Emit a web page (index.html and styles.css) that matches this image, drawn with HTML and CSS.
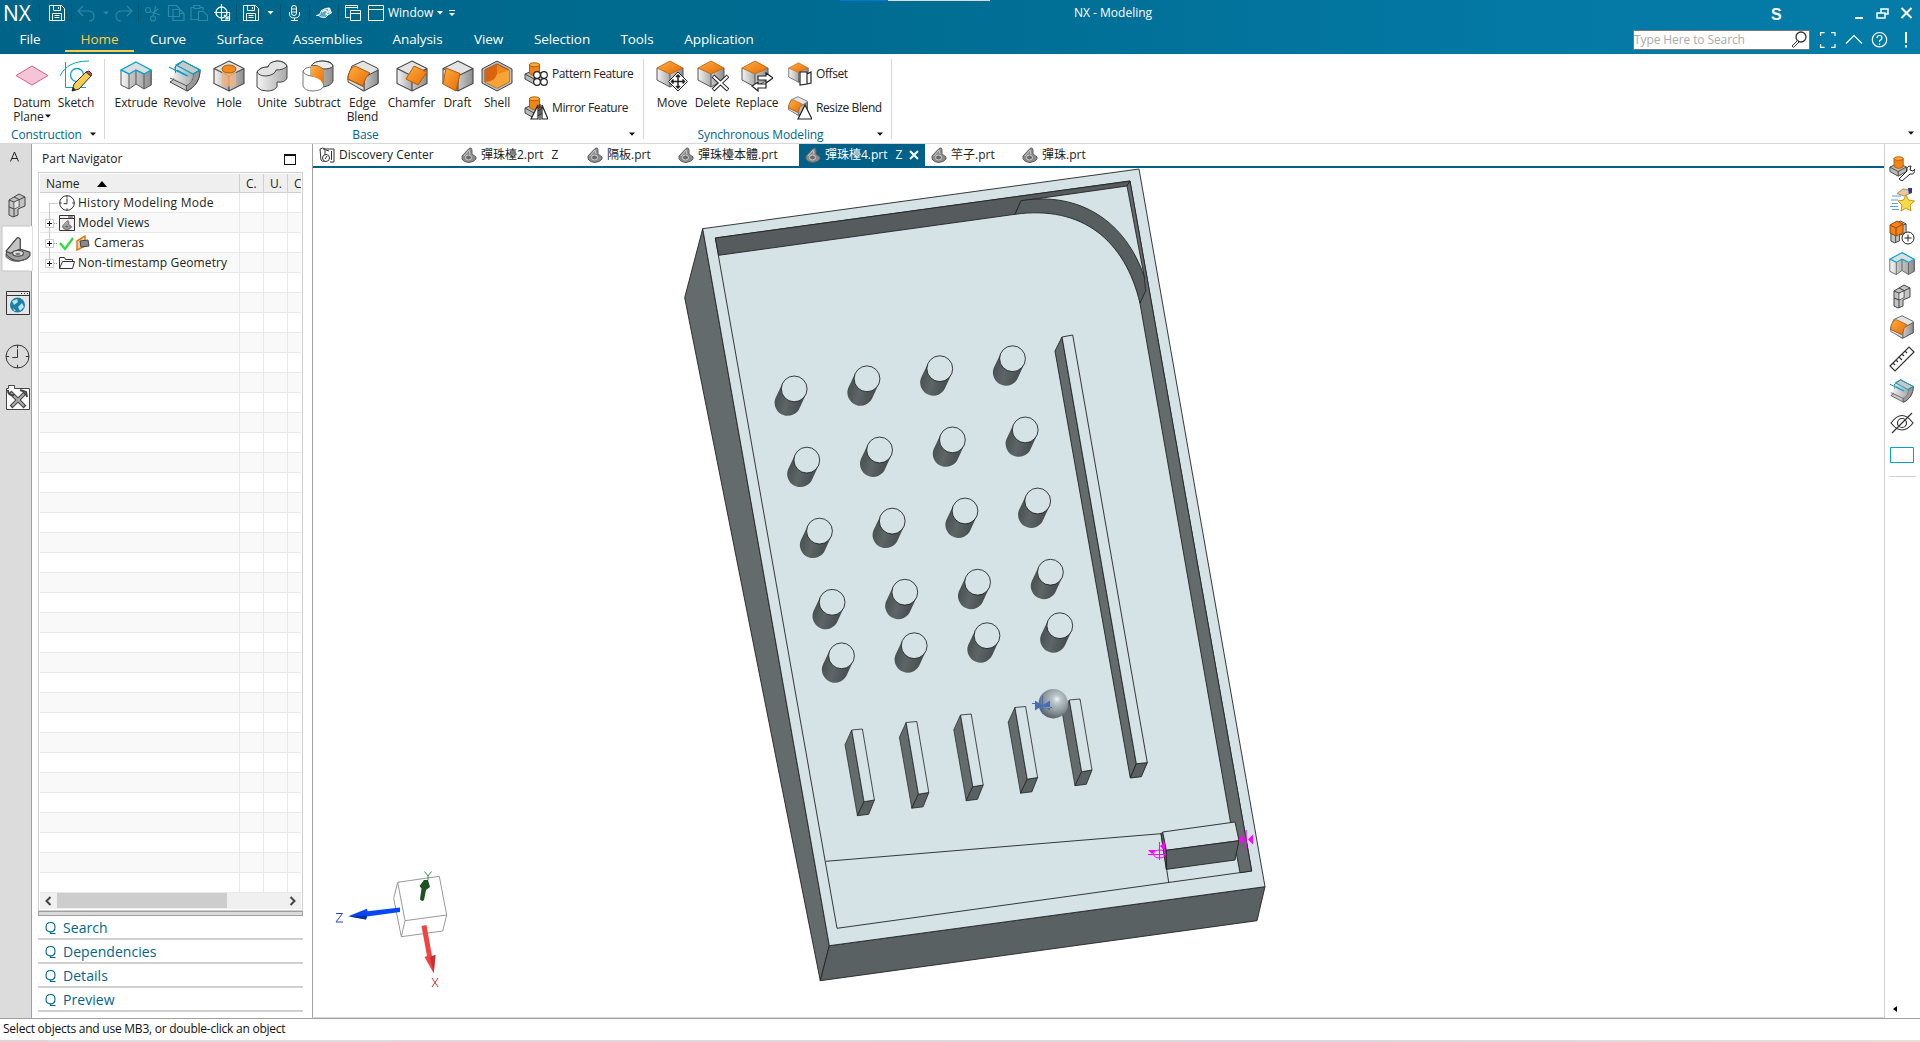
FILE: index.html
```html
<!DOCTYPE html>
<html lang="zh-Hant">
<head>
<meta charset="utf-8">
<title>NX - Modeling</title>
<link rel="stylesheet" href="styles.css">
</head>
<body>
<svg class="defs" width="0" height="0" aria-hidden="true">
  <defs>
    <linearGradient id="gO" x1="0" y1="0" x2="1" y2="1"><stop offset="0" stop-color="#fdb040"/><stop offset="1" stop-color="#e86a05"/></linearGradient>
    <linearGradient id="gG" x1="0" y1="0" x2="1" y2="0"><stop offset="0" stop-color="#f4f4f4"/><stop offset="1" stop-color="#a9a9a9"/></linearGradient>
    <linearGradient id="gD" x1="0" y1="0" x2="1" y2="0"><stop offset="0" stop-color="#c9c9c9"/><stop offset="1" stop-color="#8e8e8e"/></linearGradient>
    <linearGradient id="gPeg" x1="0" y1="0" x2="1" y2=".3"><stop offset="0" stop-color="#43494b"/><stop offset=".5" stop-color="#5d6567"/><stop offset="1" stop-color="#464c4e"/></linearGradient>
    <radialGradient id="gBall" cx=".62" cy=".35" r=".65"><stop offset="0" stop-color="#f2f8fa"/><stop offset=".2" stop-color="#bcc8cc"/><stop offset=".65" stop-color="#8d989c"/><stop offset="1" stop-color="#5e676a"/></radialGradient>
    <symbol id="cube" viewBox="0 0 32 32"><path d="M16 1 31 8.500v15L16 31 1 23.500v-15z" fill="#e4e4e4"/><path d="M1 8.500 16 16v15L1 23.500z" fill="url(#gG)"/><path d="M31 8.500 16 16v15l15-7.500z" fill="url(#gD)"/><path d="M16 1 31 8.500v15L16 31 1 23.500v-15zM1 8.500 16 16l15-7.500M16 16v15" fill="none" stroke="#444" stroke-width="1.100"/></symbol>
    <symbol id="ocube" viewBox="0 0 32 32"><path d="M1 8 14 14v13L1 20z" fill="url(#gG)"/><path d="M27 8 14 14v13l13-7z" fill="url(#gD)"/><path d="M14 1 27 8 14 14 1 8z" fill="url(#gO)" stroke="#b85a00" stroke-width=".8"/><path d="M1 8v12l13 7 13-7V8M14 14v13" fill="none" stroke="#555"/></symbol>
    <symbol id="extrude" viewBox="0 0 32 32"><path d="M1 10 9 14v15l-8-4zM16 10l8 4v15l-8-5z" fill="url(#gG)"/><path d="M9 14l7-4v14l-7 5zM24 14l8-4v15l-8 4z" fill="url(#gD)"/><path d="M16 2 31 10 24 14 16 10 9 14 1 10z" fill="#dedede"/><path d="M1 10v15l8 4 7-5 8 5 7-4V10M9 14v15M16 10v14M24 14v15" fill="none" stroke="#555"/><path d="M16 2 31 10 24 14 16 10 9 14 1 10z" fill="none" stroke="#00a5cf" stroke-width="1.400"/></symbol>
    <symbol id="revolve" viewBox="0 0 32 32"><path d="M14 1 31 10C31 20 26 27 18 31L1 22c6-3 6-8 5-15z" fill="#c9c9c9" stroke="#444"/><path d="M24 14 31 10C31 20 26 27 18 31c-1-2-1-5 0-6 5-3 6-6 6-11z" fill="#999" stroke="#444"/><path d="M7 6 24 14C24 19 23 22 18 25L2 17C7 14 8 11 7 6z" fill="url(#gG)"/><path d="M1 18 18 26" fill="none" stroke="#555"/><path d="M14 1 31 10 24 14 7 5zM0 7l18 9M8 10l11 6" fill="none" stroke="#00a5cf" stroke-width="1.300"/></symbol>
    <symbol id="part" viewBox="0 0 24 24"><path d="M2 13 11 2q2-1 3 1v9l9 3v3q-3 4-10 5-7 0-12-6z" fill="#a0a0a0" stroke="#444"/><path d="M11 2q2-1 3 1v9l-9 4-4-2z" fill="#c4c4c4" stroke="#444"/><ellipse cx="12" cy="16" rx="5" ry="2.600" fill="#e4e4e4" stroke="#444"/><ellipse cx="12" cy="16.500" rx="2.400" ry="1" fill="#777"/><path d="M1 17v2q5 5 12 4 8-1 10-5" fill="none" stroke="#555"/></symbol>
    <symbol id="tabpart" viewBox="0 0 16 16"><path d="M1 9 8 1.500q3-1.500 3 2V7l4 3v2q-2 3-7 3.500-6-.5-7-4z" fill="#8b8b8b" stroke="#606060"/><path d="M3 9 8 3l1 4" fill="none" stroke="#c8c8c8"/><ellipse cx="7.500" cy="10.500" rx="3" ry="2.500" fill="#6b6b6b" stroke="#d0d0d0"/></symbol>
    <symbol id="blocks" viewBox="0 0 20 26"><path d="M2 8 12 2l6 3v9l-7 3v6l-5 2-4-2z" fill="#c3c3c3" stroke="#444"/><path d="M2 8l5 2 11-5M7 10v15M2 15l5 2 5-2.500M7 5l5 2.500V15" fill="none" stroke="#444"/><path d="M7.500 10.500 11.500 8.500v6l-4 2z" fill="#e6e6e6"/></symbol>
    <symbol id="clock" viewBox="0 0 24 24"><g fill="none" stroke="#333"><circle cx="12" cy="12" r="11" vector-effect="non-scaling-stroke"/><path d="M12 1v3M12 20v3M1 12h3M20 12h3M12 5v8H7" vector-effect="non-scaling-stroke"/></g></symbol>
    <symbol id="save" viewBox="0 0 16 16"><path d="M.5.5h12l3 3v12H.5zM4.500.5v5h7v-5M3.500 15V8.500h9V15M5.500 10.500h5M5.500 12.500h5M9.500 2v2" fill="none" stroke="#fff"/></symbol>
    <symbol id="cyl" viewBox="0 0 24 24"><path d="M1 12 10 8l9 4v5l-9 5-9-5z" fill="#bcbcbc" stroke="#444"/><path d="M1 12l9 5 9-5M10 17v5" fill="none" stroke="#444"/><path d="M5.500 2.500v9q5 4 10 0v-9z" fill="#ee8519" stroke="#b85a00"/><ellipse cx="10.500" cy="2.800" rx="5" ry="2" fill="#fdab3f" stroke="#b85a00"/></symbol>
    <symbol id="blend" viewBox="0 0 32 32"><path d="M16 1 31 8.500v15L16 31 1 20v-4L5 6z" fill="#e4e4e4" stroke="#444"/><path d="M31 10 18 17q-1 4-1 14l14-7.500z" fill="url(#gD)" stroke="#444"/><path d="M1 19l16 8v4L1 22z" fill="#ddd" stroke="#555"/><path d="M8 6 23 13q-5 4-7 13L1 19Q2 8 8 6z" fill="url(#gO)" stroke="#b85a00"/></symbol>
    <symbol id="caret" viewBox="0 0 6 4"><path d="M0 .5h6L3 3.800z" fill="currentColor"/></symbol>
    <symbol id="peg" overflow="visible"><path d="M-12.700-4.500-19.300 9.500A13 13 0 0 0 5.300 18.500L11.700 4.500z" fill="url(#gPeg)"/><circle cx="-.5" cy=".2" r="12.900" fill="#d5e2e6" stroke="#111" stroke-width=".8"/></symbol>
    <symbol id="fin" overflow="visible"><path d="M0 0-6.700 14.700 5.700 85.700 12.300 71.700z" fill="#646b6d" stroke="#222" stroke-width=".7"/><path d="M12.300 71.700 22.700 70 17 84.300 5.700 85.700z" fill="#5a6163" stroke="#222" stroke-width=".8"/><path d="M0 0 10.700-1 22.700 70 12.300 71.700z" fill="#d5e2e6" stroke="#222" stroke-width=".8"/></symbol>
    <symbol id="q" viewBox="0 0 12 14"><path d="M5.500 1.500q4.500 0 4.500 4.700t-4.500 4.700T1 6.200 5.500 1.500zM5 12.500h5.500M5.500 11v1.500" fill="none" stroke="#00658c" stroke-width="1.100"/></symbol>
  </defs>
</svg>

<div class="app">
  <header class="top">
    <div class="titlebar">
      <span class="logo">NX</span>
      <svg class="quick" width="480" height="26" viewBox="0 0 480 26" fill="none" stroke="#fff">
        <path d="M39.500 4v18M71.500 4v18M138.500 4v18M236.500 4v18M280.500 4v18M309.500 4v18M338.500 4v18" stroke="#00526f"/>
        <use href="#save" x="49" y="5" width="16" height="16"/><use href="#save" x="243" y="5" width="16" height="16"/>
        <g stroke="#2f89a8" stroke-width="1.200"><path d="M83 6l-5 5 5 5M78 11h10q6 0 6 5t-5 5M127 6l5 5-5 5M132 11h-10q-6 0-6 5t5 5"/><path d="M103 11.500h6l-3 3z" fill="#2f89a8" stroke="none"/><circle cx="148" cy="10" r="2.500"/><circle cx="153" cy="18.500" r="2.500"/><path d="M150 11.500 160 15M153 16l3-10M158 9l-5 4"/><path d="M168.500 5.500h8l3 3v8h-11zM173 9.500h7l4 4v7h-11zM179.500 9.500v4h4M194 7.500h-3v12h7M200 7.500h3v3M194 5.500h6v3h-6zM198.500 11.500h5l4 4v5h-9z"/></g>
        <circle cx="221.500" cy="12.500" r="5.500" stroke-width="1.300"/><path d="M221.500 4v17M214 12.500h16M221.500 12.500h8v8h-8zM224 15l4 4m0-3v3h-3" stroke-width="1.100"/>
        <path d="M267.500 11h6l-3 3.500zM437 11h6l-3 3.500zM449 13h6l-3 3z" fill="#fff" stroke="none"/><path d="M449 10.500h6"/>
        <rect x="291.500" y="5.500" width="5" height="10" rx="2.500"/><path d="M289.500 12v2q0 4 5 4t5-4v-2M294.500 18v3M291 20.500h7M292 9h4M292 12h4"/>
        <path d="M316.500 15.500l3-1 2-4 4-2 4-.500 2 5-3 1.500-3 3-5-.5-1.500-1.500z" fill="#5aa9c3"/><path d="M322 12l3-2 3 2-2 2 2 1M328 8l2.500 6" stroke-width="1.300"/>
        <path d="M345.500 14.500v-9h12v3M345 7.500h12M349.500 17.500h-4v-4M350.500 10.500h10v10h-10zM350 13.500h11M368.500 5.500h15v15h-15zM368 9.500h16"/>
      </svg>
      <span class="winlabel">Window</span>
      <span class="apptitle">NX - Modeling</span>
      <span class="s">S</span>
      <svg class="wbtns" width="60" height="26" viewBox="0 0 60 26" fill="none" stroke="#fff" stroke-width="2"><path d="M0 18h8"/><path d="M26 13V9h7v5h-3M22 13h8v5h-8z" stroke-width="1.500"/><path d="M46.500 8l10 10M56.500 8l-10 10"/></svg>
    </div>
    <nav class="menu">
      <span>File</span><span class="on">Home</span><span>Curve</span><span>Surface</span><span>Assemblies</span><span>Analysis</span><span>View</span><span>Selection</span><span>Tools</span><span>Application</span>
      <div class="search"><span>Type Here to Search</span><svg width="18" height="18" viewBox="0 0 18 18" fill="#fff" stroke="#333"><circle cx="11" cy="6" r="5" stroke-width="1.300"/><path d="M7.500 9.500 2 15l1.500 1.500L9 11z"/></svg></div>
      <svg class="helpers" width="90" height="20" viewBox="0 0 90 20" fill="none" stroke="#fff" stroke-width="1.200"><path d="M.6 6V2.600h4M11 2.600h4V6M.6 14v3.400h4M11 17.400h4V14M26 13.500l8-8 8 8"/><circle cx="59.500" cy="9.700" r="7.200"/><path d="M57 8q0-2.500 2.500-2.500T62 8q0 1-2.500 3v1M59.500 13.500v1.500"/><path d="M86 2v11M86 15v2.500" stroke-width="2"/></svg>
    </nav>
    <i class="strip"></i>
  </header>

  <section class="ribbon">
    <div class="group g1">
      <div class="tools">
        <div class="tool"><svg viewBox="0 0 32 32"><path d="M0 15.500 16 6l16 9.500L16 25z" fill="#f5c4d7" stroke="#d65f8c"/></svg><b>Datum<br>Plane <svg class="car"><use href="#caret"/></svg></b></div>
        <div class="tool"><svg viewBox="0 0 32 32" fill="none"><path d="M5.500 2v25.500H26M0 16C5 6 14 1 29 1" stroke="#00a5cf"/><circle cx="17" cy="15" r="6.500" stroke="#00a5cf" stroke-width="1.300"/><path d="M12 31l2-7L26 12l5 4-12 13z" fill="#f6cc52" stroke="#333"/><path d="M26 12l3-1 3 3-1 2z" fill="#d94c55" stroke="#333"/><path d="M12 31l1-4 3 3z" fill="#222"/></svg><b>Sketch</b></div>
      </div>
      <div class="glabel">Construction</div><svg class="car more"><use href="#caret"/></svg>
    </div>
    <div class="group g2">
      <div class="tools">
        <div class="tool"><svg><use href="#extrude"/></svg><b>Extrude</b></div>
        <div class="tool"><svg><use href="#revolve"/></svg><b>Revolve</b></div>
        <div class="tool"><svg viewBox="0 0 32 32"><use href="#cube"/><path d="M9 10v15q7 3 14 0V10z" fill="#f2b27a" opacity=".8"/><ellipse cx="16" cy="9" rx="7" ry="4" fill="#f48b1c" stroke="#a85a10"/></svg><b>Hole</b></div>
        <div class="tool"><svg viewBox="0 0 32 32"><path d="M1 12v15q3 4 10 4 8 0 10-4.500v-4.500q8 1 10-4V6q-2-5-10-5-8 1-9 6Q4 7 1 12z" fill="url(#gG)" stroke="#444"/><path d="M1 12q2 4 9 4 9-1 10-6 8 0 11-4-3-5-10-5-8 1-9 6Q4 7 1 12z" fill="#e3e3e3" stroke="#444"/></svg><b>Unite</b></div>
        <div class="tool"><svg viewBox="0 0 32 32"><path d="M10 6q2-5 11-5t10 5v15q-2 5-10 6z" fill="url(#gD)" stroke="#444"/><path d="M9 6q6-2 12 3 8 0 10-3-1-4-10-5Q12 1 9 6z" fill="#eee" stroke="#444"/><path d="M1 11v15q2 5 10 5t11-5q0-5-4-8L9 16V7Q3 7 1 11z" fill="#fff" stroke="#777"/><path d="M1 11q1 4 8 5" fill="none" stroke="#777"/><path d="M9 6q10-1 13 5v15q-3-8-13-10z" fill="url(#gO)"/></svg><b>Subtract</b></div>
        <div class="tool"><svg><use href="#blend"/></svg><b>Edge<br>Blend</b></div>
        <div class="tool"><svg viewBox="0 0 32 32"><use href="#cube"/><path d="M18 6 31 12 22 25 10 19z" fill="url(#gO)" stroke="#b85a00"/></svg><b>Chamfer</b></div>
        <div class="tool"><svg viewBox="0 0 32 32"><use href="#cube"/><path d="M4 8 18 13.500 14 31 1 24z" fill="url(#gO)" stroke="#b85a00"/></svg><b>Draft</b></div>
        <div class="tool"><svg viewBox="0 0 32 32"><path d="M16 1 31 9v14L16 31 1 23V9z" fill="#bbb" stroke="#444"/><path d="M16 4 28 10v12l-12 6-12-6V10z" fill="#f0871c" stroke="#8a4a10"/><path d="M16 4v10q-2 8-12 8V10z" fill="#d9640d"/><path d="M16 14q8-2 12-4v12l-12 6-12-6q10 0 12-8z" fill="#f9a437"/></svg><b>Shell</b></div>
      </div>
      <div class="small">
        <div><svg viewBox="0 0 24 24"><use href="#cyl"/><g fill="#fff" stroke="#222" stroke-width="1.200"><circle cx="13" cy="13" r="3.300"/><circle cx="20" cy="13" r="3.300"/><circle cx="13" cy="20" r="3.300"/><circle cx="20" cy="20" r="3.300"/></g></svg>Pattern Feature</div>
        <div><svg viewBox="0 0 24 24"><use href="#cyl"/><path d="M14 9v14H7zM18 9v14h6zM16 8v16" fill="#fff" stroke="#222" stroke-width="1.200"/></svg>Mirror Feature</div>
      </div>
      <div class="glabel">Base</div><svg class="car more"><use href="#caret"/></svg>
    </div>
    <div class="group g3">
      <div class="tools">
        <div class="tool"><svg viewBox="0 0 32 32"><use href="#ocube"/><path d="M22 12l9.500 9.500-9.500 9.500-9.500-9.500z" fill="#fff" stroke="#222"/><path d="M22 15v13M15.500 21.500h13M20 17l2-2 2 2M20 26l2 2 2-2M17.500 19.500l-2 2 2 2M26.500 19.500l2 2-2 2" fill="none" stroke="#222" stroke-width="1.500"/></svg><b>Move</b></div>
        <div class="tool"><svg viewBox="0 0 32 32"><use href="#ocube"/><path d="M16 16l15 14M31 16 16 30" stroke="#222" stroke-width="4"/><path d="M16.500 16.500l14 13M30.500 16.500l-14 13" stroke="#fff" stroke-width="2"/></svg><b>Delete</b></div>
        <div class="tool"><svg viewBox="0 0 32 32"><use href="#ocube"/><path d="M17 16h8v-3l7 5-7 5v-3h-8zM25 24h-8v-2l-6 4 6 5v-3h8z" fill="#fff" stroke="#222" stroke-width="1.200"/></svg><b>Replace</b></div>
      </div>
      <div class="small">
        <div><svg viewBox="0 0 24 24"><use href="#ocube" width="24" height="24"/><path d="M12 10h7v12l-7 1zM19 12l4-2v11l-4 1" fill="#fff" stroke="#222" stroke-width="1.200"/></svg>Offset</div>
        <div><svg viewBox="0 0 24 24"><use href="#blend" width="20" height="20"/><path d="M17 9l7 14H10z" fill="#fff" stroke="#222" stroke-width="1.200"/></svg>Resize Blend</div>
      </div>
      <div class="glabel">Synchronous Modeling</div><svg class="car more"><use href="#caret"/></svg>
    </div>
    <svg class="car ribbonmore"><use href="#caret"/></svg>
  </section>

  <main class="work">
    <aside class="rail">
      <svg width="31" height="280" viewBox="0 1 31 280">
        <path d="M2 83h30v45H2z" fill="#fff" stroke="#c4c4c4"/><path d="M31 83.500v44" stroke="#fff" stroke-width="2"/>
        <path d="M10.500 18.500 14.500 9l4 9.500M12 15.500h5" fill="none" stroke="#222"/>
        <use href="#blocks" x="7" y="49" width="20" height="26"/>
        <use href="#part" x="5" y="93" width="26" height="26"/>
        <path d="M6.500 148.500h23v23h-23zM6 152.500h24" fill="#e6e6e6" stroke="#333"/><path d="M21 150.500h1m2 0h1m2 0h1" stroke="#333"/><circle cx="17.500" cy="162" r="7.500" fill="#1d7fa3"/><path d="M12 158l5-2 1 3-4 3zM18 164l4-4 2 4-4 4zM13 165l3 3-2 0z" fill="#b9e3f0"/>
        <use href="#clock" x="5" y="201" width="25" height="25"/>
        <path d="M6.500 245.500h2v-3h6v3h15v21h-23z" fill="#fff" stroke="#444"/><path d="M10 249l15 15M25 250 11 264" stroke="#444" stroke-width="4"/><path d="M11 250l13 13M24 251 12 263" stroke="#aaa" stroke-width="2"/><path d="M8 247q0 6 6 5M20 247l6 2 1 5" fill="none" stroke="#444" stroke-width="2"/>
      </svg>
    </aside>

    <section class="navigator">
      <div class="nhead"><span>Part Navigator</span><i></i></div>
      <div class="tree">
        <div class="row head"><span>Name <svg width="10" height="6"><path d="M5 0l5 6H0z"/></svg></span><span>C.</span><span>U.</span><span>C</span></div>
        <div class="rows">
          <svg class="lines" width="20" height="80" viewBox="0 0 20 80" fill="none" stroke="#999" stroke-dasharray="1 1"><path d="M9.500 10.500v57M9.500 10.500H18M14 30.500h4M14 50.500h4M14 70.500h4"/><g stroke-dasharray="none"><path d="M5.500 26.500h8v8h-8zM5.500 46.500h8v8h-8zM5.500 66.500h8v8h-8z" fill="#fff" stroke="#ccc"/><path d="M7 30.500h5M9.500 28v5M7 50.500h5M9.500 48v5M7 70.500h5M9.500 68v5" stroke="#111"/></g></svg>
          <div class="row"><span class="item"><svg width="16" height="16"><use href="#clock"/></svg>History Modeling Mode</span><span></span><span></span><span></span></div>
          <div class="row"><span class="item"><svg width="16" height="16" viewBox="0 0 16 16"><path d="M.5.5h15v15H.5zM0 3.500h16M9 2h5" fill="#f2f2f2" stroke="#333"/><use href="#tabpart" x="3" y="5" width="10" height="10"/></svg>Model Views</span><span></span><span></span><span></span></div>
          <div class="row"><span class="item"><svg width="32" height="16" viewBox="0 0 32 16"><path d="M1 8l5 6 8-11" fill="none" stroke="#2bdc3b" stroke-width="2.200"/><path d="M18 6l8-5v10l-8 4z" fill="#f7d1a8" stroke="#e07a1c" stroke-width="1.500"/><path d="M21 6l8-1 1 6-8 1z" fill="#8a8a8a" stroke="#444"/></svg>Cameras</span><span></span><span></span><span></span></div>
          <div class="row"><span class="item"><svg width="16" height="16" viewBox="0 0 16 16"><path d="M.5 13.500v-11h5l1 2h7v2M.5 13.500l3-7h12l-2 7z" fill="none" stroke="#333"/></svg>Non-timestamp Geometry</span><span></span><span></span><span></span></div>
          <div class="row"><span></span><span></span><span></span><span></span></div><div class="row"><span></span><span></span><span></span><span></span></div><div class="row"><span></span><span></span><span></span><span></span></div><div class="row"><span></span><span></span><span></span><span></span></div><div class="row"><span></span><span></span><span></span><span></span></div><div class="row"><span></span><span></span><span></span><span></span></div><div class="row"><span></span><span></span><span></span><span></span></div><div class="row"><span></span><span></span><span></span><span></span></div><div class="row"><span></span><span></span><span></span><span></span></div><div class="row"><span></span><span></span><span></span><span></span></div><div class="row"><span></span><span></span><span></span><span></span></div><div class="row"><span></span><span></span><span></span><span></span></div><div class="row"><span></span><span></span><span></span><span></span></div><div class="row"><span></span><span></span><span></span><span></span></div><div class="row"><span></span><span></span><span></span><span></span></div><div class="row"><span></span><span></span><span></span><span></span></div><div class="row"><span></span><span></span><span></span><span></span></div><div class="row"><span></span><span></span><span></span><span></span></div><div class="row"><span></span><span></span><span></span><span></span></div><div class="row"><span></span><span></span><span></span><span></span></div><div class="row"><span></span><span></span><span></span><span></span></div><div class="row"><span></span><span></span><span></span><span></span></div><div class="row"><span></span><span></span><span></span><span></span></div><div class="row"><span></span><span></span><span></span><span></span></div><div class="row"><span></span><span></span><span></span><span></span></div><div class="row"><span></span><span></span><span></span><span></span></div><div class="row"><span></span><span></span><span></span><span></span></div><div class="row"><span></span><span></span><span></span><span></span></div><div class="row"><span></span><span></span><span></span><span></span></div><div class="row"><span></span><span></span><span></span><span></span></div><div class="row"><span></span><span></span><span></span><span></span></div>
        </div>
        <div class="hscroll"><svg width="17" height="16"><path d="M10.500 4 6.500 8l4 4" fill="none" stroke="#444" stroke-width="2"/></svg><i></i><svg width="17" height="16"><path d="M6.500 4l4 4-4 4" fill="none" stroke="#444" stroke-width="2"/></svg></div>
      </div>
      <div class="splitter"></div>
      <div class="acc"><svg width="12" height="14"><use href="#q"/></svg>Search</div>
      <div class="acc"><svg width="12" height="14"><use href="#q"/></svg>Dependencies</div>
      <div class="acc"><svg width="12" height="14"><use href="#q"/></svg>Details</div>
      <div class="acc"><svg width="12" height="14"><use href="#q"/></svg>Preview</div>
    </section>

    <section class="docs">
      <div class="dtabs">
        <div class="dt d0"><svg viewBox="0 0 16 16" fill="none" stroke="#333"><path d="M1 2q3-2 5 0v12q-3 1-4-1zM7 3l3 1M10 2h5v13h-4M12.500 4v9M4 2l6 0"/><circle cx="7" cy="11" r="3.500" fill="#fff"/><path d="M6 12l2-3"/></svg><span>Discovery Center</span></div>
        <div class="dt d1"><svg><use href="#tabpart"/></svg><span>彈珠檯2.prt</span><em>Z</em></div>
        <div class="dt d2"><svg><use href="#tabpart"/></svg><span>隔板.prt</span></div>
        <div class="dt d3"><svg><use href="#tabpart"/></svg><span>彈珠檯本體.prt</span></div>
        <div class="dt d4"><svg><use href="#tabpart"/></svg><span>彈珠檯4.prt</span><em>Z</em><svg class="x" viewBox="0 0 10 10"><path d="M1 1l8 8M9 1 1 9" stroke="#fff" stroke-width="2"/></svg></div>
        <div class="dt d5"><svg><use href="#tabpart"/></svg><span>竿子.prt</span></div>
        <div class="dt d6"><svg><use href="#tabpart"/></svg><span>彈珠.prt</span></div>
      </div>
      <svg class="scene" width="1571" height="849" viewBox="313 168 1571 849" stroke-linejoin="round">
        <g stroke="#222" stroke-width=".9">
          <path d="M702.700 228.700 684.700 297.700 820.300 980.700 829.300 945.700z" fill="#646b6d"/>
          <path d="M829.300 945.700 1265 886.700 1257 920.700 820.300 980.700z" fill="#5a6163"/>
          <path d="M702.700 228.700 1139 169 1265 886.700 829.300 945.700z" fill="#d5e2e6"/>
          <path d="M715.300 238 1130 181 1251.700 871 837 928.300z" fill="#d5e2e6"/>
          <path d="M715.300 238 1130 181 1127 186 1035 199 1021 201 1015 214.300 718.700 255.300z" fill="#565c5e"/>
          <path d="M1130 181 1127 186 1144.300 277 1140 303.300 1230.700 823.300 1240 872.700 1251.700 871z" fill="#646b6d"/>
          <path d="M1021 200.700C1080 191 1126 222 1144.300 277L1145.700 290.700 1140 303.300C1125 240 1082 205 1015 214.300z" fill="#575e60"/>
          <path d="M826 861.300 1161 833.700 1168.700 882.300" fill="none"/>
          <path d="M1161 833.700 1162.700 832 1166.300 850.300V869.300z" fill="#646b6d"/>
          <path d="M1162.700 832 1235 822 1239 840.700 1166.300 850.300z" fill="#d5e2e6"/>
          <path d="M1166.300 850.300 1239 840.700 1235 860 1166.700 869.300z" fill="#5a6163"/>
          <path d="M1062 337 1055 351 1130.300 778 1136.300 763.700z" fill="#646b6d"/>
          <path d="M1136.300 763.700 1147.300 762.700 1141.300 776.700 1130.300 778z" fill="#5a6163"/>
          <path d="M1062 337 1072.700 335 1147.300 762.700 1136.300 763.700z" fill="#d5e2e6"/>
        </g>
        <use href="#peg" x="794.700" y="388.700"/><use href="#peg" x="867.500" y="378.600"/><use href="#peg" x="940.300" y="368.500"/><use href="#peg" x="1013" y="358.500"/>
        <use href="#peg" x="807.300" y="459.900"/><use href="#peg" x="880.100" y="449.800"/><use href="#peg" x="952.900" y="439.700"/><use href="#peg" x="1025.700" y="429.700"/>
        <use href="#peg" x="820" y="530.900"/><use href="#peg" x="892.700" y="520.900"/><use href="#peg" x="965.500" y="510.800"/><use href="#peg" x="1038.200" y="500.800"/>
        <use href="#peg" x="832.600" y="602.100"/><use href="#peg" x="905.300" y="592"/><use href="#peg" x="978.100" y="582"/><use href="#peg" x="1050.900" y="572"/>
        <use href="#peg" x="842" y="655.600"/><use href="#peg" x="914.700" y="645.500"/><use href="#peg" x="987.500" y="635.500"/><use href="#peg" x="1060.300" y="625.500"/>
        <use href="#fin" x="851.700" y="730"/><use href="#fin" x="906.100" y="722.500"/><use href="#fin" x="960.500" y="715"/><use href="#fin" x="1014.900" y="707.500"/><use href="#fin" x="1069.300" y="700"/>
        <circle cx="1053.300" cy="703.700" r="14.700" fill="url(#gBall)"/>
        <path d="M1035 700.500l7.500 5-7.500 5zM1050 700.500l-7.500 5 7.500 5zM1042 696h1v18h-1zM1032 703h5v1h-5zM1046 707h6v1h-6z" fill="#4a6cb8"/>
        <path d="M1239 834.500l6 5-6 5zM1253 834.500l-5 5 5 5zM1245.500 830h1.200v19h-1.200zM1165 842v9l-5-5zM1148 850h8l-4 4z" fill="#f0f"/><ellipse cx="1159.500" cy="854" rx="6" ry="4" fill="none" stroke="#f0f"/><path d="M1159.500 842v18M1148 854.500h17" stroke="#f0f" fill="none"/>
        <path d="M397.700 882.300 439.300 876.300 446.700 915 405 920.700zM397.700 882.300 393.700 898.300 401.300 936.700 442.700 931 446.700 915M405 920.700 401.300 936.700" fill="none" stroke="#999"/>
        <path d="M400 907.500v4.500l-33 4.500-1 3-17.700-3.200 18.700-7.500.5 2.500z" fill="#0846f5"/><path d="M349 916.500l17 3 1-4z" fill="#0730a8"/>
        <path d="M421.500 926l5-1 5.500 31 3.500-1-1.800 18.300-9.200-16.300 2.500-1z" fill="#ef4444"/><path d="M430 957l5.500-2-1.800 18z" fill="#c93131"/>
        <path d="M420 899.500l1.500-11-2-2.500 4.500-6h4l2 7-4 3-2 10q-2 2-4-.5z" fill="#1b5220"/>
        <g fill="none"><path d="M424.500 871.500l3.500 4.500 3.500-4.500M428 876v4" stroke="#2e9a38"/><path d="M336 913.500h6.500l-6.500 8.500h7" stroke="#2342e0"/><path d="M432 978l6 9M438 978l-6 9" stroke="#d33"/></g>
      </svg>
    </section>

    <aside class="tray">
      <svg width="26" height="26" viewBox="0 0 26 26"><use href="#cyl" width="22" height="24"/><path d="M10 24l8-8q-1-5 4-5l-1 4 3 1 2-2q0 6-5 5l-8 7z" fill="#fff" stroke="#222"/></svg>
      <svg width="26" height="26" viewBox="0 0 26 26"><path d="M3 9h9M2 13h7M3 16.500h6M1 19.500h8M3 22.500h7" stroke="#5b9de0"/><path d="M17 8l2.500 5 6 1-4.500 4 1 6-5-3-5 3 1-6-4-4 5.500-1z" fill="#fcd94a" stroke="#c89610"/><path d="M8 6.500 14 2l6 1v4l-5 2z" fill="#f3c39c" stroke="#996"/><path d="M19 1h4v5l-3 1z" fill="#28379e"/></svg>
      <svg width="26" height="26" viewBox="0 0 26 26"><use href="#blocks" width="19" height="25"/><path d="M1 6l7-4 6 3v9l-7 3-6-3z" fill="#f1811b" stroke="#9a4b06"/><path d="M1 6l6 3 7-4M7 9v8" fill="none" stroke="#9a4b06"/><circle cx="19" cy="19" r="6" fill="#fff" stroke="#222"/><path d="M15.500 19h7M19 15.500v7" stroke="#222"/></svg>
      <svg width="26" height="26"><use href="#extrude"/></svg>
      <svg width="26" height="26"><use href="#blocks"/></svg>
      <svg width="24" height="24"><use href="#blend"/></svg>
      <svg width="26" height="26" viewBox="0 0 26 26"><path d="M1 20 20 1l5 5L6 25zM4 17l2 2M7 14l2 2M10 11l3 3M13 8l2 2M16 5l2 2" fill="#fff" stroke="#333" stroke-width="1.200"/></svg>
      <svg width="24" height="24"><use href="#revolve"/></svg>
      <svg width="26" height="26" viewBox="0 0 26 26" fill="none" stroke="#333" stroke-width="1.200"><path d="M2 13q11-15 22 0-11 14-22 0zM3 23 23 3"/><circle cx="13" cy="13" r="4.500"/></svg>
      <svg width="26" height="26" viewBox="0 0 26 26"><path d="M1.500 5.500h23v15h-23z" fill="none" stroke="#00a5cf"/></svg>
      <hr>
      <svg class="left" width="4" height="6"><path d="M4 0v6L0 3z"/></svg>
    </aside>
  </main>
  <footer class="status">Select objects and use MB3, or double-click an object</footer>
  <div class="edge"></div>
</div>
</body>
</html>
```
FILE: styles.css
```css
* { box-sizing: border-box; }
body { margin: 0; background: #fff; color: #222; font: 12px/14px "Open Sans", "Noto Sans CJK TC", sans-serif; overflow: hidden; }
svg { display: block; flex: none; }
.defs { position: absolute; }
.app { width: 1920px; height: 1042px; display: grid; grid-template-rows: 54px 90px 874px 22px 2px; }

.top { position: relative; background: linear-gradient(90deg, #006489, #006c91 45%, #0479a5 80%, #057ca8); color: #fff; }
.strip { position: absolute; left: 840px; top: 0; width: 150px; height: 1px; background: linear-gradient(90deg, #0078d7 48px, #d8dde0 48px); }
.titlebar { height: 26px; display: grid; grid-template: 26px / 387px 686px 698px 88px 1fr; align-items: center; white-space: nowrap; }
.titlebar > * { grid-row: 1; }
.logo { grid-column: 1; padding-left: 3px; font-size: 21px; line-height: 26px; }
.quick { grid-column: 1 / 3; }
.winlabel { grid-column: 2; padding-left: 1px; }
.apptitle { grid-column: 3; padding-left: 1px; }
.s { grid-column: 4; font: bold 16px/22px "Liberation Sans", sans-serif; padding-top: 4px; }
.wbtns { grid-column: 5; margin-left: -4px; }
.menu { display: flex; height: 28px; font-size: 13.500px; line-height: 26px; }
.menu > span { text-align: center; height: 26px; letter-spacing: -.1px; }
.menu > span:nth-child(1) { width: 60px; margin-right: 5px; }
.menu > span:nth-child(2) { width: 69px; }
.menu > span:nth-child(3) { width: 68px; }
.menu > span:nth-child(4) { width: 76px; }
.menu > span:nth-child(5) { width: 99px; }
.menu > span:nth-child(6) { width: 81px; }
.menu > span:nth-child(7) { width: 61px; }
.menu > span:nth-child(8) { width: 86px; }
.menu > span:nth-child(9) { width: 64px; }
.menu > span:nth-child(10) { width: 100px; }
.menu .on { color: #fc4; border-bottom: 2px solid #fc4; }
.search { margin: 4px 10px 0 auto; width: 177px; height: 20px; background: #fff; border: 1px solid #777; color: #aaa; display: flex; align-items: center; justify-content: space-between; font-size: 12px; line-height: 18px; padding-right: 1px; letter-spacing: -.1px; }
.helpers { margin: 4px 10px 0 0; }

.ribbon { display: flex; border-bottom: 1px solid #d8d8d8; position: relative; }
.group { display: grid; grid-template: 66px 20px / auto 1fr; margin-top: 5px; height: 80px; border-right: 1px solid #d8d8d8; position: relative; }
.g1 { width: 105px; padding-left: 10px; }
.g2 { width: 539px; padding-left: 7px; }
.g3 { width: 248px; padding-left: 8px; }
.tools { display: flex; }
.tool { display: flex; flex-direction: column; align-items: center; width: 44px; }
.tool > svg { width: 32px; height: 32px; margin-top: 1px; }
.tool b { font-weight: 400; text-align: center; white-space: nowrap; margin-top: 4px; letter-spacing: -.1px; }
.g2 .tool:nth-child(1) { width: 48px; }
.g2 .tool:nth-child(2) { width: 49px; }
.g2 .tool:nth-child(3) { width: 40px; }
.g2 .tool:nth-child(4) { width: 46px; }
.g2 .tool:nth-child(5), .g2 .tool:nth-child(6) { width: 45px; }
.g2 .tool:nth-child(7) { width: 53px; }
.g2 .tool:nth-child(8) { width: 39px; }
.g2 .tool:nth-child(9) { width: 40px; }
.g3 .tool:nth-child(1) { width: 40px; }
.g3 .tool:nth-child(2) { width: 41px; }
.g3 .tool:nth-child(3) { width: 48px; }
.small { padding: 3px 0 0 7px; display: flex; flex-direction: column; gap: 10px; letter-spacing: -.4px; white-space: nowrap; }
.small div { display: flex; align-items: center; gap: 4px; height: 24px; }
.small svg { width: 24px; height: 24px; }
.glabel { grid-column: 1 / 3; color: #00658c; text-align: center; line-height: 20px; letter-spacing: -.1px; }
.g1 .glabel { text-align: left; padding-left: 1px; }
.g2 .glabel { padding-right: 24px; }
.g3 .glabel { padding-right: 22px; }
.car { width: 6px; height: 4px; color: #111; }
.tool b .car { display: inline-block; vertical-align: 3px; margin-left: -2px; }
.more { position: absolute; right: 8px; bottom: 3px; }
.ribbonmore { position: absolute; right: 6px; bottom: 8px; }

.work { display: grid; grid-template-columns: 32px 280px 1573px 35px; }
.rail { background: #dcdcdc; border-right: 1px solid #a0a0a0; }
.rail svg { overflow: visible; }
.navigator { padding-left: 6px; width: 280px; }
.nhead { height: 28px; padding: 2px 16px 0 4px; display: flex; align-items: center; justify-content: space-between; line-height: 28px; }
.nhead i { width: 12px; height: 11px; border: 1px solid #111; border-top-width: 2px; }
.tree { width: 265px; height: 739px; border: 1px solid #d0d0d0; padding: 1px; overflow: hidden; }
.row { display: grid; grid-template-columns: 200px 24px 24px 13px; height: 20px; line-height: 19px; border-bottom: 1px solid #e8e8e8; width: 261px; overflow: hidden; }
.row > span { border-right: 1px solid #e8e8e8; white-space: nowrap; }
.row > span:last-child { border: 0; }
.row.head { height: 19px; background: #efefef; border-color: #d0d0d0; line-height: 20px; }
.head > span { padding-left: 6px; border-color: #d0d0d0; overflow: hidden; }
.head svg { display: inline-block; margin-left: 14px; vertical-align: 1px; }
.rows { position: relative; height: 700px; overflow: hidden; }
.rows .row:nth-child(odd) { background: #f9f9f9; }
.lines { position: absolute; left: 0; top: 0; }
.item { display: flex; align-items: center; gap: 3px; padding-left: 19px; letter-spacing: .12px; }
.rows .row:nth-child(2) .item { letter-spacing: .26px; }
.hscroll { display: flex; background: #f0f0f0; height: 16px; }
.hscroll i { width: 170px; margin-right: auto; background: #cdcdcd; height: 15px; }
.splitter { width: 265px; height: 5px; background: #dcdcdc; border: 1px solid #a0a0a0; }
.acc { width: 265px; height: 24px; border-bottom: 2px solid #d0d0d0; color: #00658c; font-size: 14px; line-height: 22px; display: flex; align-items: center; padding: 1px 0 0 7px; gap: 6px; letter-spacing: .05px; }

.docs { border-left: 1px solid #a0a0a0; border-right: 1px solid #d0d0d0; border-bottom: 1px solid #d8d8d8; }
.dtabs { display: flex; height: 24px; border-bottom: 2px solid #006088; padding-left: 6px; }
.dt { display: flex; align-items: center; height: 22px; white-space: nowrap; }
.dt svg { width: 16px; height: 16px; margin-right: 4px; }
.dt em { font-style: normal; margin-left: 8px; }
.d0 { width: 142px; }
.d1 { width: 126px; }
.d2 { width: 91px; }
.d3 { width: 121px; }
.d4 { width: 126px; padding-left: 6px; background: #006088; color: #fff; }
.d5 { width: 91px; padding-left: 6px; }
.d6 { padding-left: 6px; }
.dt .x { width: 10px; height: 10px; margin: 0 0 0 7px; }

.tray { display: flex; flex-direction: column; align-items: center; padding: 11px 1px 0 0; gap: 5.900px; position: relative; }
.tray > svg { min-height: 26px; }
.tray hr { width: 27px; height: 1px; border: 0; background: #d0d0d0; margin: 2px 0 0; }
.tray > .left { position: absolute; left: 8px; bottom: 6px; min-height: 0; }
.status { border-top: 1px solid #a0a0a0; padding-left: 3px; line-height: 20px; color: #111; letter-spacing: -.24px; }
.edge { background: linear-gradient(90deg, #e2d2d6 48px, #ddd 48px 391px, #e5d8dc 391px, #d8d8e0 70%, #eadfd8); }
```
